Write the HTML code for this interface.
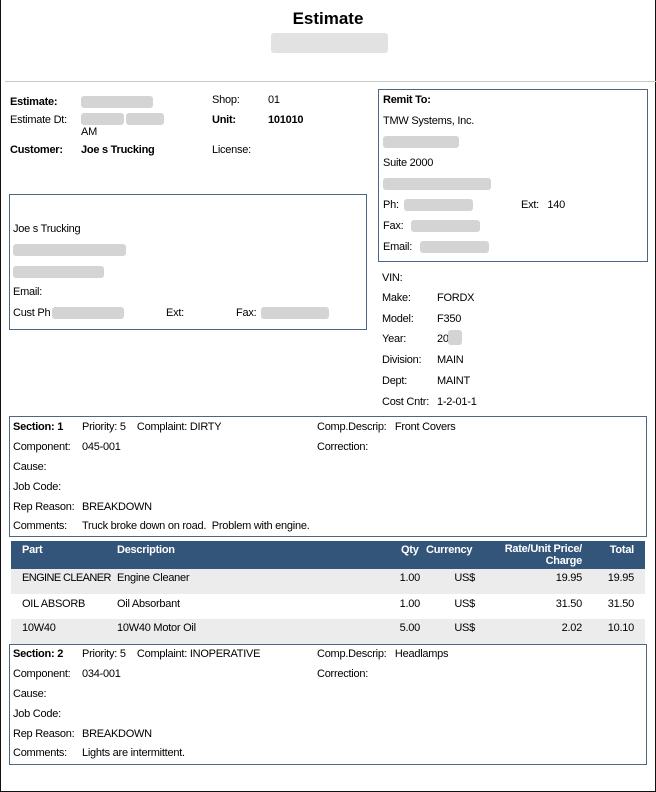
<!DOCTYPE html>
<html><head><style>
*{margin:0;padding:0;box-sizing:border-box}
body{width:656px;height:792px;background:#fff;position:relative;overflow:hidden;font-family:"Liberation Sans",Arial,sans-serif;font-size:11px;color:#000}
.t{position:absolute;line-height:14px;white-space:nowrap;margin-top:1px;letter-spacing:-0.25px}
.b{font-weight:bold}
.bl{position:absolute;background:#d4d4d4;border-radius:3px;height:12px}
.box{position:absolute;border:1px solid #4d6684}
.row{position:absolute;left:11px;width:634px;height:25px}
</style></head><body>
<div style="position:absolute;left:0;top:0;width:656px;height:792px;border-left:1px solid #111;border-right:1px solid #111;border-bottom:1px solid #111;"></div>
<div class="t b" style="left:0;width:656px;text-align:center;top:8px;font-size:17px;line-height:20px;letter-spacing:0">Estimate</div>
<div class="bl" style="left:271px;top:33px;width:117px;height:20px;background:#e2e2e2"></div>
<div style="position:absolute;left:5px;top:81px;width:651px;height:1px;background:#c8c8c8"></div>

<div class="t b" style="left:10px;top:94px">Estimate:</div>
<div class="bl" style="left:81px;top:96px;width:72px"></div>
<div class="t" style="left:10px;top:112px">Estimate Dt:</div>
<div class="bl" style="left:81px;top:113px;width:43px"></div>
<div class="bl" style="left:126px;top:113px;width:38px"></div>
<div class="t" style="left:81px;top:124px">AM</div>
<div class="t b" style="left:10px;top:142px">Customer:</div>
<div class="t b" style="left:81px;top:142px">Joe s Trucking</div>
<div class="t" style="left:212px;top:92px">Shop:</div>
<div class="t" style="left:268px;top:92px">01</div>
<div class="t b" style="left:212px;top:112px">Unit:</div>
<div class="t b" style="left:268px;top:112px">101010</div>
<div class="t" style="left:212px;top:142px">License:</div>

<div class="box" style="left:378px;top:89px;width:270px;height:173px"></div>
<div class="t b" style="left:383px;top:92px">Remit To:</div>
<div class="t" style="left:383px;top:113px">TMW Systems, Inc.</div>
<div class="bl" style="left:383px;top:136px;width:76px"></div>
<div class="t" style="left:383px;top:155px">Suite 2000</div>
<div class="bl" style="left:383px;top:178px;width:108px"></div>
<div class="t" style="left:383px;top:197px">Ph:</div>
<div class="bl" style="left:404px;top:199px;width:69px"></div>
<div class="t" style="left:521px;top:197px">Ext:&nbsp;&nbsp; 140</div>
<div class="t" style="left:383px;top:218px">Fax:</div>
<div class="bl" style="left:411px;top:220px;width:69px"></div>
<div class="t" style="left:383px;top:239px">Email:</div>
<div class="bl" style="left:420px;top:241px;width:69px"></div>

<div class="box" style="left:9px;top:194px;width:358px;height:136px"></div>
<div class="t" style="left:13px;top:221px">Joe s Trucking</div>
<div class="bl" style="left:13px;top:244px;width:113px"></div>
<div class="bl" style="left:13px;top:266px;width:91px"></div>
<div class="t" style="left:13px;top:284px">Email:</div>
<div class="t" style="left:13px;top:305px">Cust Ph</div>
<div class="bl" style="left:52px;top:307px;width:72px"></div>
<div class="t" style="left:166px;top:305px">Ext:</div>
<div class="t" style="left:236px;top:305px">Fax:</div>
<div class="bl" style="left:261px;top:307px;width:68px"></div>

<div class="t" style="left:382px;top:270px">VIN:</div>
<div class="t" style="left:382px;top:290px">Make:</div><div class="t" style="left:437px;top:290px">FORDX</div>
<div class="t" style="left:382px;top:311px">Model:</div><div class="t" style="left:437px;top:311px">F350</div>
<div class="t" style="left:382px;top:331px">Year:</div><div class="t" style="left:437px;top:331px">20</div>
<div class="bl" style="left:448px;top:330px;width:14px;height:15px"></div>
<div class="t" style="left:382px;top:352px">Division:</div><div class="t" style="left:437px;top:352px">MAIN</div>
<div class="t" style="left:382px;top:373px">Dept:</div><div class="t" style="left:437px;top:373px">MAINT</div>
<div class="t" style="left:382px;top:394px">Cost Cntr:</div><div class="t" style="left:437px;top:394px">1-2-01-1</div>

<div class="box" style="left:9px;top:416px;width:638px;height:121px"></div>
<div class="t b" style="left:13px;top:419px">Section: 1</div>
<div class="t" style="left:82px;top:419px">Priority: 5&nbsp;&nbsp;&nbsp; Complaint: DIRTY</div>
<div class="t" style="left:317px;top:419px">Comp.Descrip:&nbsp;&nbsp; Front Covers</div>
<div class="t" style="left:13px;top:439px">Component:</div><div class="t" style="left:82px;top:439px">045-001</div>
<div class="t" style="left:317px;top:439px">Correction:</div>
<div class="t" style="left:13px;top:459px">Cause:</div>
<div class="t" style="left:13px;top:479px">Job Code:</div>
<div class="t" style="left:13px;top:499px">Rep Reason:</div><div class="t" style="left:82px;top:499px">BREAKDOWN</div>
<div class="t" style="left:13px;top:518px">Comments:</div><div class="t" style="left:82px;top:518px">Truck broke down on road.&nbsp; Problem with engine.</div>

<div class="row" style="top:541px;height:28px;background:#34557a"></div>
<div class="t b" style="color:#fff;left:22px;top:542px">Part</div>
<div class="t b" style="color:#fff;left:117px;top:542px">Description</div>
<div class="t b" style="color:#fff;left:401px;top:542px">Qty</div>
<div class="t b" style="color:#fff;left:426px;top:542px">Currency</div>
<div class="t b" style="color:#fff;left:480px;width:102px;text-align:right;top:542px;line-height:12px;white-space:normal">Rate/Unit Price/<br>Charge</div>
<div class="t b" style="color:#fff;left:580px;width:54px;text-align:right;top:542px">Total</div>

<div class="row" style="top:569px;background:#ececec"></div>
<div class="row" style="top:619px;background:#ececec"></div>
<div class="t" style="left:22px;top:570px;letter-spacing:-0.6px">ENGINE CLEANER</div><div class="t" style="left:117px;top:570px">Engine Cleaner</div>
<div class="t" style="left:380px;width:40px;text-align:right;top:570px">1.00</div><div class="t" style="left:430px;width:45px;text-align:right;top:570px">US$</div>
<div class="t" style="left:520px;width:62px;text-align:right;top:570px">19.95</div><div class="t" style="left:580px;width:54px;text-align:right;top:570px">19.95</div>
<div class="t" style="left:22px;top:596px">OIL ABSORB</div><div class="t" style="left:117px;top:596px">Oil Absorbant</div>
<div class="t" style="left:380px;width:40px;text-align:right;top:596px">1.00</div><div class="t" style="left:430px;width:45px;text-align:right;top:596px">US$</div>
<div class="t" style="left:520px;width:62px;text-align:right;top:596px">31.50</div><div class="t" style="left:580px;width:54px;text-align:right;top:596px">31.50</div>
<div class="t" style="left:22px;top:620px">10W40</div><div class="t" style="left:117px;top:620px">10W40 Motor Oil</div>
<div class="t" style="left:380px;width:40px;text-align:right;top:620px">5.00</div><div class="t" style="left:430px;width:45px;text-align:right;top:620px">US$</div>
<div class="t" style="left:520px;width:62px;text-align:right;top:620px">2.02</div><div class="t" style="left:580px;width:54px;text-align:right;top:620px">10.10</div>

<div class="box" style="left:9px;top:644px;width:638px;height:121px"></div>
<div class="t b" style="left:13px;top:646px">Section: 2</div>
<div class="t" style="left:82px;top:646px">Priority: 5&nbsp;&nbsp;&nbsp; Complaint: INOPERATIVE</div>
<div class="t" style="left:317px;top:646px">Comp.Descrip:&nbsp;&nbsp; Headlamps</div>
<div class="t" style="left:13px;top:666px">Component:</div><div class="t" style="left:82px;top:666px">034-001</div>
<div class="t" style="left:317px;top:666px">Correction:</div>
<div class="t" style="left:13px;top:686px">Cause:</div>
<div class="t" style="left:13px;top:706px">Job Code:</div>
<div class="t" style="left:13px;top:726px">Rep Reason:</div><div class="t" style="left:82px;top:726px">BREAKDOWN</div>
<div class="t" style="left:13px;top:745px">Comments:</div><div class="t" style="left:82px;top:745px">Lights are intermittent.</div>
</body></html>
